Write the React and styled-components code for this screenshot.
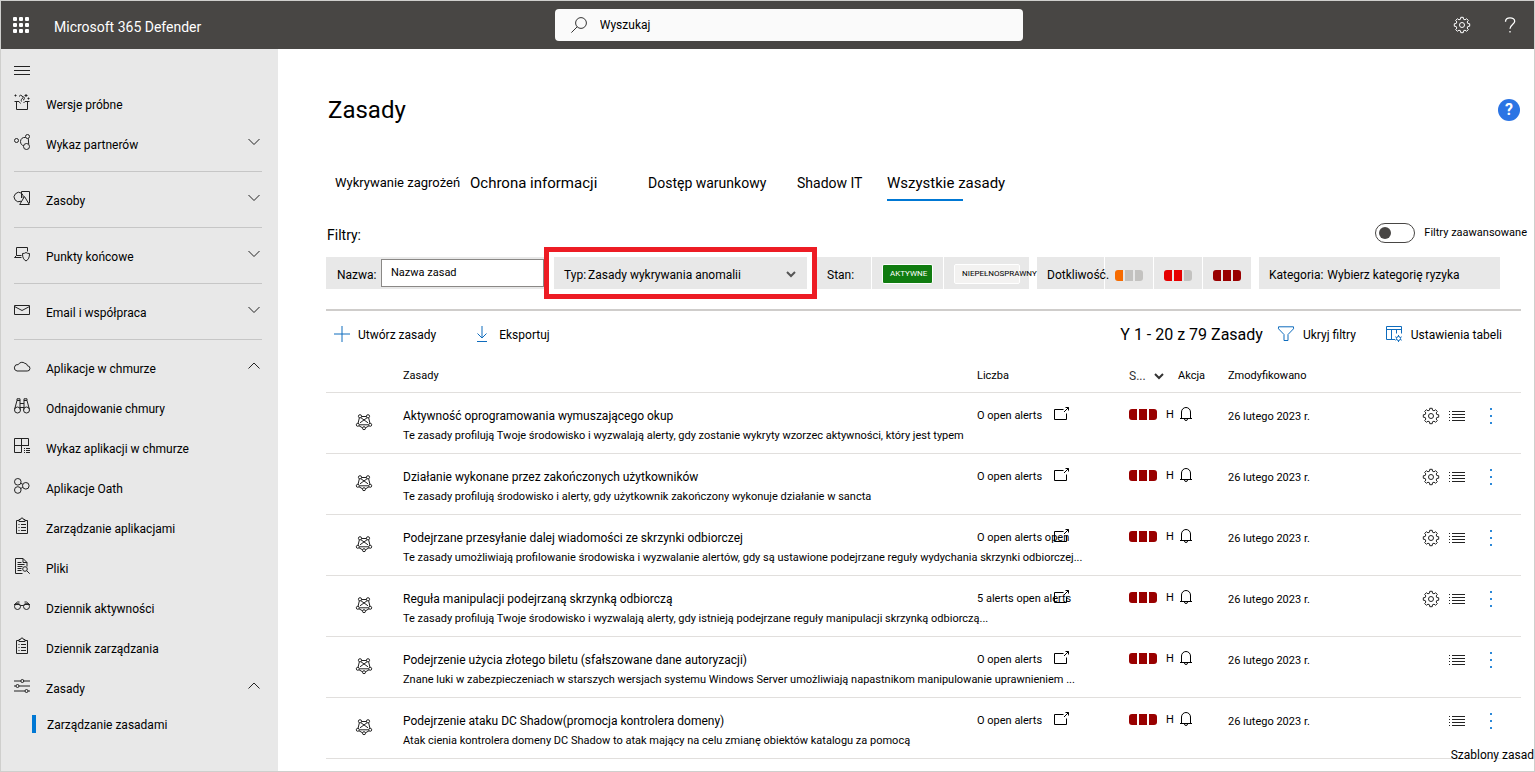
import React, { useState } from 'react';
import styled, { createGlobalStyle } from 'styled-components';

const gearPath = (teeth, outer, inner) => {
  const points = [];
  const step = (Math.PI * 2) / teeth;
  for (let i = 0; i < teeth; i++) {
    const a = i * step - Math.PI / 2;
    [
      [-0.32, inner],
      [-0.2, outer],
      [0.2, outer],
      [0.32, inner],
    ].forEach(([offset, r]) => {
      const angle = a + offset * step;
      points.push(
        `${(8 + r * Math.cos(angle)).toFixed(2)} ${(8 + r * Math.sin(angle)).toFixed(2)}`
      );
    });
  }
  return `M${points.join('L')}Z`;
};

const shapes = {
  menu: <path d="M0 3.5h16M0 7.5h16M0 11.5h16" />,
  trial: (
    <path d="M2.5 7.5v8h11v-8M.5 7.5h4.5l1.5 2M15.5 7.5H11L9.5 9M5 2.5a2 2 0 1 1 3 2.5c-1 .5-1 1.5-.5 2.5M9 6c2 0 1.5-3 .5-3.5M1.5.5v2M.5 1.5h2M12 0v3M10.5 1.5h3M14.5 3.5v2M13.5 4.5h2" />
  ),
  partners: (
    <>
      <circle cx="2.5" cy="6.5" r="2" />
      <circle cx="13.5" cy="2.5" r="2" />
      <circle cx="12.5" cy="12.5" r="3" />
      <path d="M11.5 3.5C8.5 3 6.5 5 6.5 7.5s1.5 4 3.2 4.2M14.3 4.5l.4 5.5" />
    </>
  ),
  assets: (
    <>
      <path d="M7 11.2A4.700 4.700 0 1 1 7.5 3.200M7.500 8V1.500h8V13h-1M7.500 3.200q2 1.500 1.800 5" />
      <path d="M10.500 6.500l4.800 8H5.700z" />
    </>
  ),
  endpoints: (
    <>
      <path d="M7.500 11.500H.5l2-2v-8h11v4M2.500 9.500h5" />
      <path d="M12 6.500c1 .8 2 1 3.500 1 0 4-1 6-3.500 7.500-2.500-1.500-3.500-3.500-3.500-7.500 1.500 0 2.500-.2 3.500-1z" />
    </>
  ),
  mail: <path d="M.5 3.500h15v9H.5zM.5 4.500l7.500 4 7.500-4" />,
  cloud: (
    <path d="M3 13h10.200a2.600 2.600 0 0 0 .3-5.200 3 3 0 0 0-2.700-2.500A4.200 4.200 0 0 0 4.300 6.600 3.200 3.200 0 0 0 3 13z" />
  ),
  binoculars: (
    <>
      <circle cx="3.500" cy="12" r="3" />
      <circle cx="12.500" cy="12" r="3" />
      <path d="M.7 11L3 2.500h3v9M15.300 11L13 2.500h-3v9M3 2.500V.8h3v2M13 2.500V.8h-3v2M6 5.500h4M6 9.500h4" />
    </>
  ),
  catalog: (
    <path d="M14.500 8V.5H.5v14h7V.5M.5 7.500h14M10 10.500h1M12 10.500h4M10 12.500h1M12 12.500h4M10 14.500h1M12 14.500h4" />
  ),
  oauth: (
    <>
      <circle cx="3.800" cy="3.800" r="3.300" />
      <circle cx="3.800" cy="12" r="3.300" />
      <circle cx="11.800" cy="7.800" r="3.300" />
      <path d="M6.800 5.300l2 1M6.800 10.500l2-1.200" />
    </>
  ),
  clipboard: (
    <path d="M5 2.500H2.500v13h11v-13H11M5 3.500v-2h1.500a1.500 1.500 0 0 1 3 0H11v2zM4.500 6.500h1M7 6.500h5M4.500 9.500h1M7 9.500h5M4.500 12.500h1M7 12.500h5" />
  ),
  files: (
    <>
      <path d="M8.500 15.500h-7V.5h7.500l4 4v4M9 .5v4h4M3.500 4.500h4M3.500 6.500h7M3.500 8.500h5M3.500 10.500h4M3.500 12.500h4" />
      <circle cx="11" cy="11" r="2.300" />
      <path d="M12.700 12.700l3 3" />
    </>
  ),
  glasses: (
    <>
      <circle cx="3.500" cy="8.500" r="3" />
      <circle cx="12.500" cy="8.500" r="3" />
      <path d="M0 6.500h5l1.500 1h3l1.500-1h5M1 6l2.500-2h2M15 6l-2.500-2h-2" />
    </>
  ),
  sliders: (
    <>
      <path d="M0 3h7M9.500 3H16M0 8h2M5 8h11M0 13h11M14 13h2" />
      <circle cx="8.300" cy="3" r="1.500" />
      <circle cx="3.500" cy="8" r="1.500" />
      <circle cx="12.500" cy="13" r="1.500" />
    </>
  ),
  down: <path d="M2.500 5l5.500 5.500L13.500 5" />,
  up: <path d="M2.500 10.500L8 5l5.500 5.500" />,
  caret: <path d="M4 6l4 4 4-4" strokeWidth="2" />,
  gear: (
    <>
      <path d={gearPath(8, 7.8, 6)} />
      <circle cx="8" cy="8" r="2.500" />
    </>
  ),
  help: (
    <path
      d="M3.500 4.800C3.500 2.200 5.300.8 8 .8s4.700 1.400 4.700 3.500c0 3.200-4.700 3.500-4.700 7.500M8 14v1.600"
      strokeWidth="1.300"
    />
  ),
  search: (
    <>
      <circle cx="10" cy="6" r="5.400" />
      <path d="M6.200 9.800L.4 15.600" />
    </>
  ),
  plus: <path d="M8 0v16M0 8h16" />,
  download: <path d="M8 0v12M3.500 7.500L8 12l4.500-4.500M3 15.500h10" />,
  filter: <path d="M.5.8h15v2L10 8.500v6H6v-6L.5 2.800z" />,
  tableSettings: (
    <>
      <path d="M9 13.500H.5V.5h15v7M.5 3.500h15M5.500 3.500v10M10.500 3.500v4" />
      <circle cx="12.500" cy="12.500" r="2" />
      <path d="M12.500 9v1.500M12.500 14.500V16M9.300 10.800l1.400.7M14.300 13.500l1.400.7M15.700 10.800l-1.400.7M10.700 13.500l-1.400.7" />
    </>
  ),
  anomaly: (
    <>
      <path d="M5.500 2.500h5M3.300 4L2 9.500M12.700 4L14 9.500M5 3.800l7 5M11 3.800l-7 5M3.500 10.800h9M3 11.800l3.500 2M13 11.800l-3.500 2" />
      <circle cx="4" cy="2.300" r="1.600" />
      <circle cx="12" cy="2.300" r="1.600" />
      <circle cx="1.800" cy="10.800" r="1.500" />
      <circle cx="14.200" cy="10.800" r="1.500" />
      <circle cx="8" cy="14.200" r="1.500" />
    </>
  ),
  external: <path d="M9.500 3.500H.5v10h12V7.500M10 6l4.500-4.500M11.500 1.500h3v3" />,
  bell: (
    <path d="M2 12.500h12M3.500 12.500V6a4.500 4.500 0 0 1 9 0v6.500M6.500 13a1.500 1.500 0 0 0 3 0" />
  ),
  list: (
    <path d="M0 3.500h1M3 3.500h13M0 6.500h1M3 6.500h13M0 9.500h1M3 9.500h13M0 12.500h1M3 12.500h13" />
  ),
};

function Icon({ name, size = 16 }) {
  return (
    <Svg $size={size} viewBox="0 0 16 16" aria-hidden="true">
      {shapes[name]}
    </Svg>
  );
}

const navItems = [
  { label: 'Wersje próbne', icon: 'trial' },
  { label: 'Wykaz partnerów', icon: 'partners', arrow: 'down', line: true },
  { label: 'Zasoby', icon: 'assets', arrow: 'down', line: true },
  { label: 'Punkty końcowe', icon: 'endpoints', arrow: 'down', line: true },
  { label: 'Email i współpraca', icon: 'mail', arrow: 'down', line: true },
  { label: 'Aplikacje w chmurze', icon: 'cloud', arrow: 'up' },
  { label: 'Odnajdowanie chmury', icon: 'binoculars' },
  { label: 'Wykaz aplikacji w chmurze', icon: 'catalog' },
  { label: 'Aplikacje Oath', icon: 'oauth' },
  { label: 'Zarządzanie aplikacjami', icon: 'clipboard' },
  { label: 'Pliki', icon: 'files' },
  { label: 'Dziennik aktywności', icon: 'glasses' },
  { label: 'Dziennik zarządzania', icon: 'clipboard' },
  { label: 'Zasady', icon: 'sliders', arrow: 'up' },
];

const tabs = [
  { label: 'Wykrywanie zagrożeń', width: 135, size: 13 },
  { label: 'Ochrona informacji', width: 178, size: 15 },
  { label: 'Dostęp warunkowy', width: 149, size: 14 },
  { label: 'Shadow IT', width: 90, size: 14 },
  { label: 'Wszystkie zasady', width: 130, size: 15 },
];

const policies = [
  {
    name: 'Aktywność oprogramowania wymuszającego okup',
    text: 'Te zasady profilują Twoje środowisko i wyzwalają alerty, gdy zostanie wykryty wzorzec aktywności, który jest typem',
    count: 'O open alerts',
    gear: true,
  },
  {
    name: 'Działanie wykonane przez zakończonych użytkowników',
    text: 'Te zasady profilują środowisko i alerty, gdy użytkownik zakończony wykonuje działanie w sancta',
    count: 'O open alerts',
    gear: true,
  },
  {
    name: 'Podejrzane przesyłanie dalej wiadomości ze skrzynki odbiorczej',
    text: 'Te zasady umożliwiają profilowanie środowiska i wyzwalanie alertów, gdy są ustawione podejrzane reguły wydychania skrzynki odbiorczej...',
    count: 'O open alerts open',
    gear: true,
  },
  {
    name: 'Reguła manipulacji podejrzaną skrzynką odbiorczą',
    text: 'Te zasady profilują Twoje środowisko i wyzwalają alerty, gdy istnieją podejrzane reguły manipulacji skrzynką odbiorczą...',
    count: '5 alerts open alerts',
    gear: true,
  },
  {
    name: 'Podejrzenie użycia złotego biletu (sfałszowane dane autoryzacji)',
    text: 'Znane luki w zabezpieczeniach w starszych wersjach systemu Windows Server umożliwiają napastnikom manipulowanie uprawnieniem ...',
    count: 'O open alerts',
  },
  {
    name: 'Podejrzenie ataku DC Shadow(promocja kontrolera domeny)',
    text: 'Atak cienia kontrolera domeny DC Shadow to atak mający na celu zmianę obiektów katalogu za pomocą',
    count: 'O open alerts',
  },
];

const HIGH = ['#990000', '#990000', '#990000'];
const MEDIUM = ['#e60000', '#e60000', '#c3c2c0'];
const LOW = ['#f76b00', '#c3c2c0', '#c3c2c0'];

function Severity({ colors }) {
  return (
    <Bars>
      {colors.map((color, index) => (
        <Bar key={index} $color={color} />
      ))}
    </Bars>
  );
}

function App() {
  const [tab, setTab] = useState(4);
  const [advanced, setAdvanced] = useState(false);
  const [name, setName] = useState('');

  return (
    <>
      <GlobalStyle />
      <Page>
        <Header>
          <Brand>
            <Waffle aria-label="Aplikacje">
              {Array.from({ length: 9 }, (_, i) => (
                <Dot key={i} />
              ))}
            </Waffle>
            <BrandName>Microsoft 365 Defender</BrandName>
          </Brand>
          <SearchBox>
            <Icon name="search" />
            <SearchInput type="search" placeholder="Wyszukaj" aria-label="Wyszukaj" />
          </SearchBox>
          <HeaderActions>
            <IconButton aria-label="Ustawienia">
              <Icon name="gear" />
            </IconButton>
            <IconButton aria-label="Pomoc">
              <Icon name="help" />
            </IconButton>
          </HeaderActions>
        </Header>

        <Body>
          <Sidebar>
            <MenuButton aria-label="Menu">
              <Icon name="menu" />
            </MenuButton>
            {navItems.map((item) => (
              <React.Fragment key={item.label}>
                <NavItem href="#">
                  <Icon name={item.icon} />
                  <NavLabel>{item.label}</NavLabel>
                  {item.arrow && <Icon name={item.arrow} />}
                </NavItem>
                {item.line && <NavLine />}
              </React.Fragment>
            ))}
            <SubItem href="#">
              <NavLabel>Zarządzanie zasadami</NavLabel>
            </SubItem>
          </Sidebar>

          <Main>
            <TitleRow>
              <Title>Zasady</Title>
              <HelpButton aria-label="Pomoc">?</HelpButton>
            </TitleRow>

            <Tabs>
              {tabs.map((item, index) => (
                <Tab
                  key={item.label}
                  $width={item.width}
                  $size={item.size}
                  $active={index === tab}
                  onClick={() => setTab(index)}
                >
                  {item.label}
                </Tab>
              ))}
            </Tabs>

            <FilterHead>
              <FilterTitle>Filtry:</FilterTitle>
              <ToggleLabel>
                <Toggle
                  type="checkbox"
                  role="switch"
                  checked={advanced}
                  onChange={(e) => setAdvanced(e.target.checked)}
                />
                Filtry zaawansowane
              </ToggleLabel>
            </FilterHead>

            <FilterBar>
              <NameFilter>
                <FilterLabel>Nazwa:</FilterLabel>
                <NameInput
                  type="text"
                  placeholder="Nazwa zasad"
                  value={name}
                  onChange={(e) => setName(e.target.value)}
                />
              </NameFilter>
              <TypeFilter>
                Typ:
                <Select>
                  <option>Zasady wykrywania anomalii</option>
                </Select>
                <Icon name="caret" />
              </TypeFilter>
              <Group $layer={2}>
                <Cell $width={54}>Stan:</Cell>
                <Cell $width={71}>
                  <StateButton $on>AKTYWNE</StateButton>
                </Cell>
                <Cell $width={85}>
                  <StateButton>NIEPEŁNOSPRAWNY</StateButton>
                </Cell>
              </Group>
              <Group $layer={1}>
                <SeverityLabel $width={67}>Dotkliwość.</SeverityLabel>
                {[LOW, MEDIUM, HIGH].map((colors, index) => (
                  <SeverityButton key={index} aria-label={`Dotkliwość ${index + 1}`}>
                    <Severity colors={colors} />
                  </SeverityButton>
                ))}
              </Group>
              <CategoryFilter>
                Kategoria:
                <Select>
                  <option>Wybierz kategorię ryzyka</option>
                </Select>
              </CategoryFilter>
            </FilterBar>

            <Toolbar>
              <ToolButton>
                <Icon name="plus" />
                Utwórz zasady
              </ToolButton>
              <ToolButton>
                <Icon name="download" />
                Eksportuj
              </ToolButton>
              <Summary>Y 1 - 20 z 79 Zasady</Summary>
              <ToolButton>
                <Icon name="filter" />
                Ukryj filtry
              </ToolButton>
              <ToolButton>
                <Icon name="tableSettings" />
                Ustawienia tabeli
              </ToolButton>
            </Toolbar>

            <Table>
              <colgroup>
                <Col $width={77} />
                <Col />
                <Col $width={152} />
                <Col $width={49} />
                <Col $width={50} />
                <Col $width={194} />
                <Col $width={99} />
              </colgroup>
              <thead>
                <tr>
                  <Th />
                  <Th>Zasady</Th>
                  <Th>Liczba</Th>
                  <Th>
                    <SortButton>
                      S...
                      <Icon name="caret" />
                    </SortButton>
                  </Th>
                  <Th>Akcja</Th>
                  <Th>Zmodyfikowano</Th>
                  <Th />
                </tr>
              </thead>
              <tbody>
                {policies.map((policy) => (
                  <tr key={policy.name}>
                    <Td>
                      <PolicyIcon>
                        <Icon name="anomaly" />
                      </PolicyIcon>
                    </Td>
                    <Td>
                      <PolicyName href="#">{policy.name}</PolicyName>
                      <PolicyText>{policy.text}</PolicyText>
                    </Td>
                    <Td>
                      <Line>
                        <Count>{policy.count}</Count>
                        <Icon name="external" />
                      </Line>
                    </Td>
                    <Td>
                      <Line>
                        <Severity colors={HIGH} />
                        <Level>H</Level>
                      </Line>
                    </Td>
                    <Td>
                      <Line>
                        <Icon name="bell" />
                      </Line>
                    </Td>
                    <Td>
                      <DateText>26 lutego 2023 r.</DateText>
                    </Td>
                    <Td>
                      <RowActions>
                        {policy.gear && (
                          <IconButton aria-label="Ustawienia zasad">
                            <Icon name="gear" />
                          </IconButton>
                        )}
                        <IconButton aria-label="Lista">
                          <Icon name="list" />
                        </IconButton>
                        <MoreButton aria-label="Więcej">
                          <i />
                          <i />
                          <i />
                        </MoreButton>
                      </RowActions>
                    </Td>
                  </tr>
                ))}
              </tbody>
            </Table>
            <Templates href="#">Szablony zasad</Templates>
          </Main>
        </Body>
      </Page>
    </>
  );
}

const GlobalStyle = createGlobalStyle`
  * {
    box-sizing: border-box;
  }
  body {
    margin: 0;
    color: #000;
    background: #fff;
    font-family: Roboto, 'Liberation Sans', sans-serif;
    font-size: 12px;
    line-height: 20px;
  }
  button, input, select {
    margin: 0;
    padding: 0;
    border: 0;
    color: inherit;
    background: none;
    font: inherit;
  }
  a {
    color: inherit;
    text-decoration: none;
  }
`;

const Svg = styled.svg`
  flex: none;
  display: block;
  width: ${({ $size }) => $size}px;
  height: ${({ $size }) => $size}px;
  overflow: visible;
  fill: none;
  stroke: currentColor;
  stroke-width: 1;
`;

const Page = styled.div`
  position: relative;
  display: flex;
  flex-direction: column;
  min-height: 100vh;
  border: 1px solid #cfcfcd;
  overflow: hidden;
`;

const Header = styled.header`
  display: grid;
  grid-template-columns: 13fr 468px 12fr;
  align-items: center;
  height: 48px;
  color: #fff;
  background: #484644;
`;

const Brand = styled.div`
  display: flex;
  align-items: center;
  gap: 25px;
  padding-left: 12px;
`;

const Waffle = styled.button`
  display: grid;
  grid-template-columns: repeat(3, 4px);
  gap: 2px;
`;

const Dot = styled.span`
  width: 4px;
  height: 4px;
  border-radius: 1px;
  background: #fff;
`;

const BrandName = styled.span`
  padding-top: 4px;
  font-size: 14px;
`;

const SearchBox = styled.label`
  display: flex;
  align-items: center;
  gap: 13px;
  height: 32px;
  padding-left: 16px;
  border-radius: 4px;
  color: #333;
  background: #fafafa;
`;

const SearchInput = styled.input`
  flex: 1;
  outline: none;
  &::placeholder {
    color: #000;
    opacity: 1;
  }
`;

const HeaderActions = styled.div`
  display: flex;
  justify-content: flex-end;
  gap: 32px;
  padding-right: 16px;
`;

const IconButton = styled.button`
  display: flex;
  align-items: center;
  cursor: pointer;
`;

const Body = styled.div`
  display: flex;
  flex: 1;
`;

const Sidebar = styled.nav`
  flex: none;
  width: 277px;
  padding: 0 16px 0 13px;
  background: #e8e8e8;
`;

const MenuButton = styled.button`
  display: block;
  padding: 14px 0 5px;
  color: #222;
`;

const NavItem = styled.a`
  display: flex;
  align-items: center;
  gap: 16px;
  height: 40px;
  svg {
    margin-bottom: 4px;
    color: #222;
  }
`;

const NavLabel = styled.span`
  flex: 1;
  padding-top: 2px;
`;

const NavLine = styled.hr`
  height: 1px;
  margin: 7px 0 8px;
  border: 0;
  background: #c6c6c6;
`;

const SubItem = styled.a`
  display: flex;
  align-items: center;
  height: 32px;
  padding-left: 18px;
  &::before {
    content: '';
    width: 4px;
    height: 18px;
    margin-right: 11px;
    background: #0078d4;
  }
`;

const Main = styled.main`
  flex: 1;
  min-width: 0;
  padding: 45px 13px 0 48px;
`;

const TitleRow = styled.div`
  display: flex;
  justify-content: space-between;
  align-items: center;
  height: 32px;
  padding: 0 1px 0 2px;
`;

const Title = styled.h1`
  margin: 0;
  font-size: 24px;
  line-height: 32px;
  font-weight: 400;
`;

const HelpButton = styled.button`
  width: 22px;
  height: 22px;
  border-radius: 50%;
  color: #fff;
  background: #2b74e4;
  font-size: 16px;
  font-weight: 700;
  line-height: 22px;
`;

const Tabs = styled.div`
  display: flex;
  margin-top: 43px;
  padding-left: 9px;
`;

const Tab = styled.button`
  width: ${({ $width }) => $width}px;
  height: 32px;
  padding-bottom: 5px;
  font-size: ${({ $size }) => $size}px;
  text-align: left;
  white-space: nowrap;
  background: ${({ $active }) =>
    $active ? 'linear-gradient(#0078d4, #0078d4) left bottom / 76px 2px no-repeat' : 'none'};
`;

const FilterHead = styled.div`
  display: flex;
  justify-content: space-between;
  align-items: center;
  height: 20px;
  margin: 22px -6px 14px 0;
`;

const FilterTitle = styled.span`
  padding: 4px 0 0 1px;
  font-size: 14px;
`;

const ToggleLabel = styled.label`
  display: flex;
  align-items: center;
  gap: 9px;
  font-size: 11px;
`;

const Toggle = styled.input`
  appearance: none;
  display: flex;
  align-items: center;
  width: 40px;
  height: 20px;
  padding: 0 3px;
  border: 1px solid #484644;
  border-radius: 10px;
  &::before {
    content: '';
    width: 12px;
    height: 12px;
    border-radius: 50%;
    background: #484644;
  }
  &:checked {
    justify-content: flex-end;
  }
`;

const FilterBar = styled.div`
  display: flex;
  height: 32px;
  white-space: nowrap;
`;

const NameFilter = styled.label`
  display: flex;
  align-items: center;
  justify-content: space-between;
  width: 218px;
  padding-left: 11px;
  background: #e8e8e8;
`;

const FilterLabel = styled.span`
  padding-top: 4px;
`;

const NameInput = styled.input`
  width: 163px;
  height: 28px;
  margin-bottom: 1px;
  padding-left: 9px;
  border: 1px solid #8a8886;
  background: #fff;
  font-size: 11px;
  &::placeholder {
    color: #000;
    opacity: 1;
  }
`;

const TypeFilter = styled.label`
  display: flex;
  align-items: center;
  gap: 2px;
  width: 253px;
  margin: 0 10px;
  padding: 4px 8px 0 10px;
  background: #e8e8e8;
  outline: 5px solid #ed1c24;
  outline-offset: 5px;
  svg {
    margin-bottom: 2px;
    color: #555;
  }
`;

const Select = styled.select`
  flex: 1;
  appearance: none;
`;

const Group = styled.div`
  position: relative;
  z-index: ${({ $layer }) => $layer};
  display: flex;
  gap: 1px;
  margin-right: 8px;
`;

const Cell = styled.div`
  display: flex;
  align-items: center;
  width: ${({ $width }) => $width}px;
  padding: 4px 0 0 10px;
  background: #e8e8e8;
`;

// the label runs on over the first severity button
const SeverityLabel = styled(Cell)`
  position: relative;
  z-index: 1;
  font-size: 12px;
`;

const StateButton = styled.button`
  flex: none;
  width: ${({ $on }) => ($on ? 51 : 66)}px;
  height: 20px;
  margin-bottom: 2px;
  padding-left: 7px;
  border: 1px solid #fff;
  border-radius: 2px;
  color: ${({ $on }) => ($on ? '#fff' : '#000')};
  background: ${({ $on }) => ($on ? '#107c10' : '#f3f2f1')};
  font-size: 8px;
  line-height: 18px;
  text-align: left;
`;

const SeverityButton = styled.button`
  display: flex;
  align-items: center;
  justify-content: center;
  width: 48px;
  padding-top: 4px;
  background: #e8e8e8;
`;

const Bars = styled.span`
  display: flex;
  gap: 2px;
  border-radius: 3px;
  overflow: hidden;
`;

const Bar = styled.span`
  width: 8px;
  height: 11px;
  background: ${({ $color }) => $color};
`;

const CategoryFilter = styled.label`
  display: flex;
  align-items: center;
  gap: 4px;
  width: 241px;
  padding: 4px 0 0 10px;
  background: #e8e8e8;
`;

const Toolbar = styled.div`
  display: flex;
  align-items: center;
  height: 50px;
  margin-top: 20px;
  padding: 0 19px 0 8px;
  border-top: 2px solid #cfcdcb;
  gap: 30px;
`;

const ToolButton = styled.button`
  display: flex;
  align-items: center;
  gap: 9px;
  white-space: nowrap;
  svg {
    margin-bottom: 3px;
    color: #0f6cbd;
  }
  &:first-child {
    gap: 8px;
    margin-right: 8px;
  }
`;

const Summary = styled.span`
  margin-left: auto;
  margin-right: -15px;
  font-size: 16px;
`;

const Table = styled.table`
  width: 100%;
  table-layout: fixed;
  border-collapse: separate;
  border-spacing: 0;
`;

const Col = styled.col`
  width: ${({ $width }) => ($width ? `${$width}px` : 'auto')};
`;

const Th = styled.th`
  height: 34px;
  padding: 0;
  border-bottom: 1px solid #e1dfdd;
  font-size: 11px;
  font-weight: 400;
  text-align: left;
`;

const Td = styled.td`
  height: 61px;
  padding: 13px 0 0;
  border-bottom: 1px solid #e1dfdd;
  vertical-align: top;
  white-space: nowrap;
`;

const SortButton = styled.button`
  display: flex;
  align-items: center;
  gap: 5px;
  color: #333;
  font-size: 12px;
`;

const PolicyIcon = styled.span`
  display: block;
  padding: 8px 0 0 30px;
  color: #222;
`;

const PolicyName = styled.a`
  display: block;
`;

const PolicyText = styled.div`
  font-size: 11px;
`;

const Line = styled.div`
  display: flex;
  align-items: center;
  height: 16px;
`;

const Count = styled.span`
  width: 77px;
  padding-top: 4px;
  font-size: 11px;
`;

const Level = styled.span`
  margin-left: 9px;
  padding-top: 2px;
  font-size: 11px;
`;

const DateText = styled.span`
  font-size: 11px;
`;

const RowActions = styled.div`
  display: flex;
  align-items: center;
  justify-content: flex-end;
  gap: 10px;
  height: 20px;
  padding-right: 29px;
  color: #222;
`;

const MoreButton = styled.button`
  display: flex;
  flex-direction: column;
  gap: 5px;
  margin-left: 15px;
  i {
    width: 2px;
    height: 2px;
    background: #2b88d8;
  }
`;

const Templates = styled.a`
  position: absolute;
  right: 0;
  bottom: 6px;
`;

export default App;
